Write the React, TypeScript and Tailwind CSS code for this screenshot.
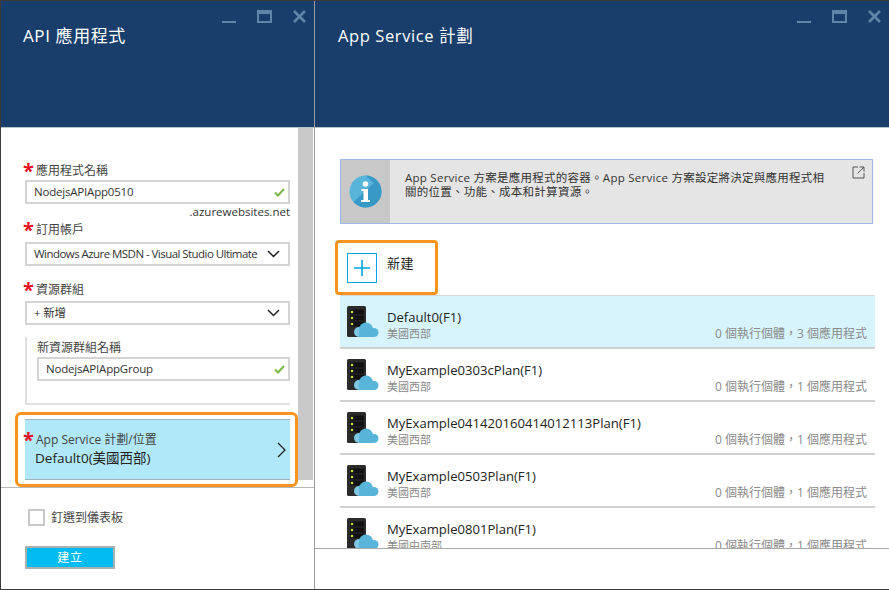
import React from 'react'

const font = { fontFamily: '"Open Sans", "Noto Sans CJK TC", sans-serif' }

const WindowButtons = () => (
  <div className="flex items-start justify-end gap-[21px] pt-[9px] pr-[8px]">
    <svg width="14" height="14" viewBox="0 0 14 14"><rect x="0" y="11" width="14" height="2" fill="#5f86a8" /></svg>
    <svg width="15" height="13" viewBox="0 0 15 13"><path d="M0 0h15v13H0z M2 4v7h11V4z" fill="#5f86a8" fillRule="evenodd" /></svg>
    <svg width="13" height="13" viewBox="0 0 13 13"><path d="M1 1l11 11M12 1L1 12" stroke="#5f86a8" strokeWidth="2.6" /></svg>
  </div>
)

const Star = () => <span className="absolute left-[-2px] top-[-4px] text-[20px] leading-[24px] font-bold text-[#e81123]">*</span>

const Check = () => (
  <svg width="11" height="9" viewBox="0 0 11 9" className="shrink-0"><path d="M1 4.5l3 3L10 1" fill="none" stroke="#7ab845" strokeWidth="2" /></svg>
)

const Chevron = () => (
  <svg width="13" height="8" viewBox="0 0 13 8" className="shrink-0"><path d="M1 1l5.5 5.5L12 1" fill="none" stroke="#222" strokeWidth="1.5" /></svg>
)

const Label = ({ text, star = true }: { text: string; star?: boolean }) => (
  <div className={`relative h-[16px] text-[12px] leading-[16px] text-[#444] ${star ? 'pl-[11px]' : ''}`}>
    {star && <Star />}
    {text}
  </div>
)

const Field = ({ value, children, className = '', textClass = 'tracking-[-0.2px]' }: { value: string; children: React.ReactNode; className?: string; textClass?: string }) => (
  <div className={`flex h-[24px] items-center justify-between border-2 border-[#d4d4d4] bg-white pl-[7px] pr-[3px] text-[11.5px] text-[#333] ${className}`}>
    <span className={`whitespace-nowrap ${textClass}`}>{value}</span>
    {children}
  </div>
)

const ServerIcon = () => (
  <svg width="33" height="34" viewBox="0 0 33 34" className="mt-[3px] shrink-0">
    <rect x="0" y="0" width="19" height="31" rx="1.5" fill="#2b2b2b" />
    <rect x="3" y="3.5" width="14" height="5" fill="#111" />
    <rect x="3" y="9.5" width="14" height="5" fill="#111" />
    <rect x="3" y="15.5" width="14" height="5" fill="#111" />
    <circle cx="5" cy="6" r="1.3" fill="#c8dc3c" />
    <circle cx="5" cy="12" r="1.3" fill="#c8dc3c" />
    <circle cx="5" cy="18" r="1.3" fill="#c8dc3c" />
    {/* cloud */}
    <circle cx="12" cy="26" r="5" fill="#7fc8e4" />
    <circle cx="19" cy="23.500" r="7" fill="#59b4d9" />
    <circle cx="27" cy="26.500" r="4.500" fill="#59b4d9" />
    <rect x="12" y="25" width="15" height="6" fill="#59b4d9" />
  </svg>
)

const plans = [
  { name: 'Default0(F1)', region: '美國西部', stats: '0 個執行個體，3 個應用程式', active: true },
  { name: 'MyExample0303cPlan(F1)', region: '美國西部', stats: '0 個執行個體，1 個應用程式' },
  { name: 'MyExample041420160414012113Plan(F1)', region: '美國西部', stats: '0 個執行個體，1 個應用程式' },
  { name: 'MyExample0503Plan(F1)', region: '美國西部', stats: '0 個執行個體，1 個應用程式' },
  { name: 'MyExample0801Plan(F1)', region: '美國中南部', stats: '0 個執行個體，1 個應用程式' },
]

export default function App() {
  return (
    <div style={font} className="flex h-[590px] w-[889px] overflow-hidden border border-[#3a3a3a] border-r-0 bg-white">
      {/* left blade */}
      <div className="flex w-[313px] shrink-0 flex-col">
        <div className="h-[127px] shrink-0 border-b border-[#b8c0c8] bg-[#1a3e6b]">
          <WindowButtons />
          <div className="mt-[1px] pl-[22px] text-[17px] leading-[22px] text-white tracking-[0.6px]">API 應用程式</div>
        </div>
        <div className="flex h-[359px] shrink-0">
          <div className="w-[297px] shrink-0 pt-[35px] pl-[24px] pr-[8px]">
            <Label text="應用程式名稱" />
            <Field value="NodejsAPIApp0510" className="mt-[1px]"><Check /></Field>
            <div className="h-[16px] text-right text-[11.500px] leading-[16px] text-[#333]">.azurewebsites.net</div>
            <div className="mt-[2px]"><Label text="訂用帳戶" /></div>
            <Field value="Windows Azure MSDN - Visual Studio Ultimate" textClass="tracking-[-0.55px]" className="mt-[4px] pr-[8px]"><Chevron /></Field>
            <div className="mt-[16px]"><Label text="資源群組" /></div>
            <Field value="+ 新增" className="mt-[3px] pr-[8px]"><Chevron /></Field>
            <div className="mt-[12px] h-[68px] border-b-2 border-l-2 border-[#e0e0e0] pl-[10px] pt-[3px]">
              <Label text="新資源群組名稱" star={false} />
              <Field value="NodejsAPIAppGroup" className="mt-[1px]"><Check /></Field>
            </div>
            <div className="-ml-[10px] -mr-[8px] mt-[7px] h-[75px] rounded-[6px] border-[3px] border-[#f7931e] pl-[7px] pr-[5px] pt-[4px]">
              <div className="relative flex h-[61px] items-center justify-between border-y border-[#a0b4bc] bg-[#b1e8f9] pr-[3px]">
                <div className="pl-[10px] pt-[1px]">
                  <div className="relative -ml-[10px] pl-[11px] text-[12px] leading-[16px] text-[#444]"><Star />App Service 計劃/位置</div>
                  <div className="text-[13.500px] leading-[20px] text-[#222]">Default0(美國西部)</div>
                </div>
                <svg width="10" height="16" viewBox="0 0 10 16"><path d="M1 1l7 7-7 7" fill="none" stroke="#222" strokeWidth="1.300" /></svg>
              </div>
            </div>
          </div>
          <div className="h-[352px] w-[15px] shrink-0 bg-[#c8c8c8]" />
        </div>
        <div className="flex-1 border-t border-[#b8b8b8] pl-[24px] pt-[20px]">
          <div className="flex items-center gap-[6px] pl-[3px]">
            <div className="h-[17px] w-[17px] border-2 border-[#c8c8c8]" />
            <span className="mt-[1px] text-[12px] leading-[17px] text-[#444]">釘選到儀表板</span>
          </div>
          <button className="mt-[20px] h-[23px] w-[90px] border-2 border-[#a8b0b4] bg-[#00bcf2] text-[12px] leading-[18px] tracking-[0.8px] text-white">建立</button>
        </div>
      </div>

      {/* right blade */}
      <div className="flex min-w-0 flex-1 flex-col border-l border-[#9a9a9a]">
        <div className="h-[127px] shrink-0 border-b border-[#b8c0c8] bg-[#1a3e6b]">
          <WindowButtons />
          <div className="mt-[1px] pl-[23px] text-[16.500px] leading-[22px] tracking-[0.6px] text-white">App Service 計劃</div>
        </div>
        <div className="h-[420px] shrink-0 overflow-hidden pl-[25px] pr-[14px] pt-[31px]">
          <div className="relative mr-[2px] flex h-[65px] border border-[#9db8e4] bg-[#e5e5e5]">
            <div className="flex w-[49px] shrink-0 items-center justify-center bg-[#c8c8c8]">
              <svg width="33" height="33" viewBox="0 0 33 33">
                <circle cx="16.500" cy="16.500" r="16" fill="#59b4d9" />
                <path d="M16.500 .5a16 16 0 0 1 0 32 16 16 0 0 1-12-5.500L25 8z" fill="#3999c6" />
                <circle cx="16.500" cy="9" r="2.800" fill="#fff" />
                <path d="M12.500 14h6.500v11h2v2h-9v-2h2.500v-9h-2z" fill="#fff" />
              </svg>
            </div>
            <div className="pl-[15px] pt-[11px] text-[11.500px] leading-[14px] tracking-[0.26px] text-[#333]">
              <div className="whitespace-nowrap">App Service 方案是應用程式的容器。App Service 方案設定將決定與應用程式相</div>
              <div>關的位置、功能、成本和計算資源。</div>
            </div>
            <svg width="13" height="13" viewBox="0 0 13 13" className="absolute right-[7px] top-[6px]">
              <path d="M6 1H1v11h11V7M7.500 1H12v4.500M12 1L5.500 7.500" fill="none" stroke="#555" strokeWidth="1" />
            </svg>
          </div>
          <div className="-ml-[5px] mt-[16px] flex h-[55px] w-[103px] items-center gap-[10px] rounded-[4px] border-[3px] border-[#f7931e] pl-[9px]">
            <div className="flex h-[30px] w-[30px] items-center justify-center border border-[#00a4e4]">
              <svg width="16" height="16" viewBox="0 0 16 16"><path d="M8 0v16M0 8h16" stroke="#00a4e4" strokeWidth="1.600" /></svg>
            </div>
            <span className="-mt-[8px] text-[13px] tracking-[0.4px] text-[#222]">新建</span>
          </div>
          <div className="border-t border-[#d8d8d8]">
            {plans.map((p) => (
              <div key={p.name} className={`flex h-[53px] items-center border-b-2 border-[#d0d0d0] pl-[7px] pr-[8px] ${p.active ? 'border-b-0 bg-[#d7f4fc]' : ''}`}>
                <ServerIcon />
                <div className="ml-[7px] mt-[7px] flex-1">
                  <div className="text-[13.100px] leading-[18px] text-[#222]">{p.name}</div>
                  <div className="flex items-center justify-between leading-[16px] text-[#8a8a8a]">
                    <span className="text-[11px]">{p.region}</span>
                    <span className="text-[12px]">{p.stats}</span>
                  </div>
                </div>
              </div>
            ))}
          </div>
        </div>
        <div className="flex-1 border-t border-[#a8a8a8]" />
      </div>
    </div>
  )
}
